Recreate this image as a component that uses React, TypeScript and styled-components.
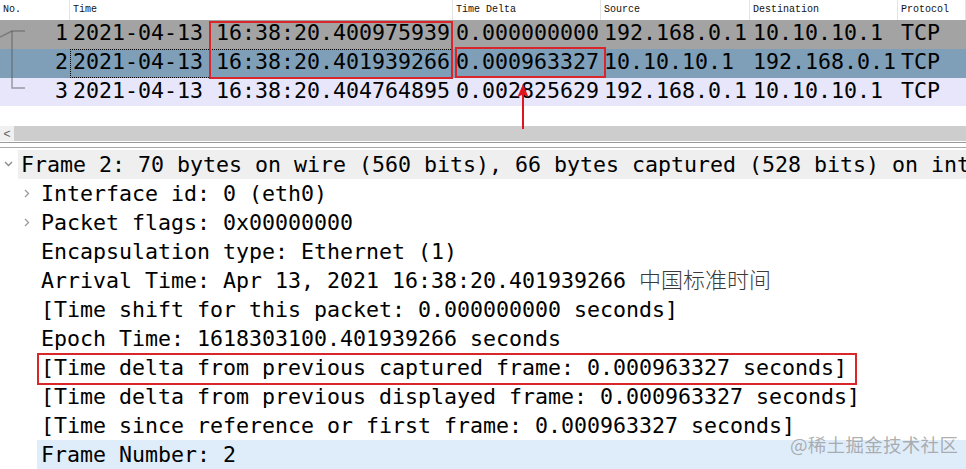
import React from "react";
import styled, { createGlobalStyle } from "styled-components";

const Global = createGlobalStyle`
  html, body { margin: 0; padding: 0; background: #ffffff; overflow: hidden; }
  #root { width: 966px; height: 469px; }
`;

const MONO = `"DejaVu Sans Mono", "Liberation Mono", monospace`;
const CJK = `"Noto Sans CJK SC", "Noto Sans", sans-serif`;

const Root = styled.div`
  position: relative;
  width: 966px;
  height: 469px;
  overflow: hidden;
  background: #ffffff;
  display: flex;
  flex-direction: column;
  font-family: ${MONO};
  color: #000;
`;

const COLS = "70px 383px 148px 149px 148px 1fr";

const HeaderRow = styled.div`
  display: grid;
  grid-template-columns: ${COLS};
  height: 20px;
  background: #ffffff;
  font-family: "Liberation Mono", monospace;
  font-size: 10px;
  line-height: 20px;
  color: #111;
`;

const HeaderCell = styled.div`
  padding-left: 3px;
  border-right: 1px solid #e3e3e3;
  white-space: nowrap;
  overflow: hidden;
`;

const rowBg: Record<string, string> = {
  ignored: "#a3a3a3",
  selected: "#7f9eb8",
  normal: "#e7e6fb",
};

const PacketRow = styled.div<{ $kind: "ignored" | "selected" | "normal" }>`
  display: grid;
  grid-template-columns: ${COLS};
  height: 29px;
  line-height: 26px;
  background: ${(p) => rowBg[p.$kind]};
  font-size: 21.6px;
  white-space: nowrap;
`;

const Cell = styled.div<{ $right?: boolean; $focus?: boolean }>`
  padding: ${(p) => (p.$right ? "0 2px 0 0" : "0 0 0 3px")};
  text-align: ${(p) => (p.$right ? "right" : "left")};
  overflow: hidden;
  box-sizing: border-box;
  ${(p) => (p.$focus ? "outline: 1px dotted #000; outline-offset: -1px;" : "")}
`;

const Gap = styled.div`
  height: 20px;
`;

const HScroll = styled.div`
  display: flex;
  height: 15px;
  background: #cdcdcd;
`;

const ScrollBtn = styled.div`
  width: 14px;
  background: #f0f0f0;
  display: flex;
  align-items: center;
  justify-content: center;
  font-family: "Liberation Sans", sans-serif;
  font-size: 12px;
  color: #606060;
`;

const Splitter = styled.div`
  height: 4px;
  border-top: 1px solid #9a9a9a;
  border-bottom: 1px solid #a8a8a8;
  background: #ffffff;
  margin-top: 1px;
`;

const Tree = styled.div`
  display: flex;
  flex-direction: column;
  padding-top: 2px;
`;

const TreeItem = styled.div`
  position: relative;
`;

const TreeRow = styled.div<{ $level: number; $bg?: string }>`
  height: 29px;
  margin-left: ${(p) => (p.$level === 0 ? 18 : 37)}px;
  padding-left: ${(p) => (p.$level === 0 ? 3 : 4)}px;
  background: ${(p) => p.$bg || "transparent"};
  font-size: 21.6px;
  line-height: 29px;
  white-space: pre;
  overflow: hidden;
`;

const Chevron = styled.span<{ $level: number }>`
  position: absolute;
  left: ${(p) => (p.$level === 0 ? 3 : 22)}px;
  top: 0;
  width: 10px;
  height: 29px;
  display: flex;
  align-items: center;
  justify-content: center;
`;

const Cjk = styled.span`
  font-family: ${CJK};
  font-size: 22px;
  line-height: 1;
  color: #3a3a3a;
  font-weight: 300;
`;

const RedBox = styled.div<{ $x: number; $y: number; $w: number; $h: number }>`
  position: absolute;
  left: ${(p) => p.$x}px;
  top: ${(p) => p.$y}px;
  width: ${(p) => p.$w}px;
  height: ${(p) => p.$h}px;
  border: 2px solid #d9262a;
  box-sizing: border-box;
  pointer-events: none;
`;

const Overlay = styled.svg<{ $x: number; $y: number }>`
  position: absolute;
  left: ${(p) => p.$x}px;
  top: ${(p) => p.$y}px;
  overflow: visible;
`;

const Watermark = styled.div`
  position: absolute;
  left: 790px;
  top: 431px;
  font-family: ${CJK};
  font-size: 18.5px;
  color: rgba(150, 150, 150, 0.75);
  letter-spacing: 0.3px;
`;

const packets = [
  { no: 1, time: "2021-04-13 16:38:20.400975939", delta: "0.000000000", src: "192.168.0.1", dst: "10.10.10.1", proto: "TCP", kind: "ignored" as const },
  { no: 2, time: "2021-04-13 16:38:20.401939266", delta: "0.000963327", src: "10.10.10.1", dst: "192.168.0.1", proto: "TCP", kind: "selected" as const },
  { no: 3, time: "2021-04-13 16:38:20.404764895", delta: "0.002825629", src: "192.168.0.1", dst: "10.10.10.1", proto: "TCP", kind: "normal" as const },
];

const ChevDown = () => (
  <svg width="9" height="6" viewBox="0 0 9 6">
    <path d="M1 1 L4.5 4.5 L8 1" fill="none" stroke="#8a8a8a" strokeWidth="1.3" />
  </svg>
);
const ChevRight = () => (
  <svg width="6" height="9" viewBox="0 0 6 9">
    <path d="M1 1 L4.5 4.5 L1 8" fill="none" stroke="#9a9a9a" strokeWidth="1.3" />
  </svg>
);

type Item = { level: number; text: React.ReactNode; chevron?: "down" | "right"; bg?: string };

const items: Item[] = [
  { level: 0, chevron: "down", bg: "#efefef", text: "Frame 2: 70 bytes on wire (560 bits), 66 bytes captured (528 bits) on interface eth0, id 0" },
  { level: 1, chevron: "right", text: "Interface id: 0 (eth0)" },
  { level: 1, chevron: "right", text: "Packet flags: 0x00000000" },
  { level: 1, text: "Encapsulation type: Ethernet (1)" },
  { level: 1, text: <>{"Arrival Time: Apr 13, 2021 16:38:20.401939266 "}<Cjk>中国标准时间</Cjk></> },
  { level: 1, text: "[Time shift for this packet: 0.000000000 seconds]" },
  { level: 1, text: "Epoch Time: 1618303100.401939266 seconds" },
  { level: 1, text: "[Time delta from previous captured frame: 0.000963327 seconds]" },
  { level: 1, text: "[Time delta from previous displayed frame: 0.000963327 seconds]" },
  { level: 1, text: "[Time since reference or first frame: 0.000963327 seconds]" },
  { level: 1, bg: "#dfedfa", text: "Frame Number: 2" },
];

export default function App() {
  return (
    <>
      <Global />
      <Root>
        <HeaderRow>
          <HeaderCell>No.</HeaderCell>
          <HeaderCell>Time</HeaderCell>
          <HeaderCell>Time Delta</HeaderCell>
          <HeaderCell>Source</HeaderCell>
          <HeaderCell>Destination</HeaderCell>
          <HeaderCell>Protocol</HeaderCell>
        </HeaderRow>
        {packets.map((p) => (
          <PacketRow key={p.no} $kind={p.kind}>
            <Cell $right>{p.no}</Cell>
            <Cell $focus={p.kind === "selected"}>{p.time}</Cell>
            <Cell>{p.delta}</Cell>
            <Cell>{p.src}</Cell>
            <Cell>{p.dst}</Cell>
            <Cell>{p.proto}</Cell>
          </PacketRow>
        ))}
        <Gap />
        <HScroll>
          <ScrollBtn>&lt;</ScrollBtn>
        </HScroll>
        <Splitter />
        <Tree>
          {items.map((it, i) => (
            <TreeItem key={i}>
              <TreeRow $level={it.level} $bg={it.bg}>
                {it.text}
              </TreeRow>
              {it.chevron && (
                <Chevron $level={it.level}>
                  {it.chevron === "down" ? <ChevDown /> : <ChevRight />}
                </Chevron>
              )}
            </TreeItem>
          ))}
        </Tree>

        <Overlay $x={0} $y={20} width="30" height="90" viewBox="0 0 30 90">
          <path d="M0 17 L12 11 L25 11" fill="none" stroke="rgba(90,90,90,0.55)" strokeWidth="1.5" />
          <path d="M12 11 L12 68 L25 68" fill="none" stroke="rgba(90,90,90,0.55)" strokeWidth="1.5" />
        </Overlay>

        <RedBox $x={209} $y={21} $w={244} $h={58} />
        <RedBox $x={455} $y={47} $w={151} $h={31} />
        <RedBox $x={37} $y={353} $w={820} $h={32} />

        <Overlay $x={516} $y={84} width="14" height="46" viewBox="0 0 14 46">
          <path d="M7 8 L7 45" stroke="#e0151b" strokeWidth="2" />
          <path d="M7 0 L12.5 13 L7 10.5 L1.5 13 Z" fill="#e0151b" />
        </Overlay>

        <Watermark>@稀土掘金技术社区</Watermark>
      </Root>
    </>
  );
}
